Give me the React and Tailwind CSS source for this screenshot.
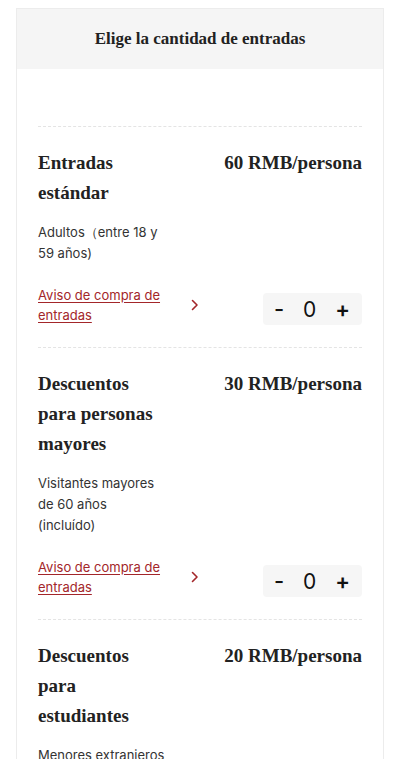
import React, { useState } from 'react';

const tickets = [
    { id: 1, title: 'Entradas estándar', price: '60 RMB/persona', desc: 'Adultos（entre 18 y 59 años)' },
    { id: 2, title: 'Descuentos para personas mayores', price: '30 RMB/persona', desc: 'Visitantes mayores de 60 años (incluído)' },
    { id: 3, title: 'Descuentos para estudiantes', price: '20 RMB/persona', desc: 'Menores extranjeros de 6 a 18 años y estudiantes' },
];

const serif = { fontFamily: '"Liberation Serif", "Times New Roman", serif' };

const Stepper = ({ value, onChange }) => (
    <div className="ml-auto flex h-8 w-[99px] items-center justify-between rounded bg-[#f6f6f6] pl-[11px] pr-[12px] text-[#111]">
        <button type="button" onClick={() => onChange(Math.max(0, value - 1))} className="text-[22px] leading-none font-medium">
            -
        </button>
        <span className="text-[21px] leading-none">{value}</span>
        <button type="button" onClick={() => onChange(value + 1)} className="text-[22px] leading-none font-semibold">
            +
        </button>
    </div>
);

const TicketItem = ({ ticket, count, setCount }) => (
    <div className="border-t border-dashed border-[#e4e4e4] pt-[21px] pb-[22px]">
        <div className="flex justify-between text-[19px] font-bold leading-[30px] text-[#222]" style={serif}>
            <h3 className="w-[120px]">{ticket.title}</h3>
            <span>{ticket.price}</span>
        </div>
        <p className="mt-[14px] w-[128px] text-[13px] leading-[21px] text-[#333]">{ticket.desc}</p>
        <div className="mt-[21px] flex items-end">
            <a href="#" className="w-[135px] text-[13px] leading-[20px] text-[#a3262a] underline underline-offset-2">
                Aviso de compra de entradas
            </a>
            <svg width="8" height="12" viewBox="0 0 8 12" className="ml-[18px] self-center" fill="none">
                <path d="M1.5 1.5L6 6l-4.5 4.5" stroke="#a3262a" strokeWidth="1.6" strokeLinecap="round" strokeLinejoin="round" />
            </svg>
            <Stepper value={count} onChange={setCount} />
        </div>
    </div>
);

const App = () => {
    const [counts, setCounts] = useState({ 1: 0, 2: 0, 3: 0 });

    return (
        <div className="min-h-screen bg-white px-4 pt-2" style={{ fontFamily: 'Inter, "Open Sans", sans-serif' }}>
            <div className="border border-[#ececec] bg-white">
                {/* Header */}
                <div className="flex h-[60px] items-center justify-center bg-[#f5f5f5]">
                    <h2 className="text-[17px] font-bold text-[#222]" style={serif}>Elige la cantidad de entradas</h2>
                </div>
                <div className="px-[21px] pt-[57px]">
                    {tickets.map(ticket => (
                        <TicketItem
                            key={ticket.id}
                            ticket={ticket}
                            count={counts[ticket.id]}
                            setCount={v => setCounts({ ...counts, [ticket.id]: v })}
                        />
                    ))}
                </div>
            </div>
        </div>
    );
};

export default App;
